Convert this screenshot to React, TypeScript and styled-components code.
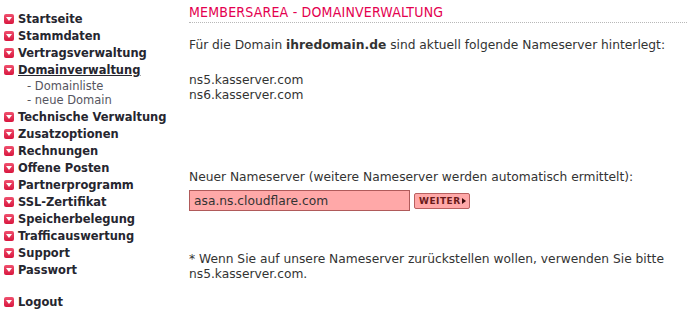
import React from "react"
import styled, { createGlobalStyle } from "styled-components"

const GlobalStyle = createGlobalStyle`
	html, body {
		margin: 0;
		padding: 0;
		background: #ffffff;
	}
	body {
		font-family: "DejaVu Sans", Verdana, sans-serif;
		color: #333333;
	}
`

const Page = styled.div`
	display: flex;
	width: 687px;
	height: 316px;
	overflow: hidden;
`

const Sidebar = styled.nav`
	width: 189px;
	flex-shrink: 0;
	padding: 10px 0 0 4px;
	box-sizing: border-box;
	display: flex;
	flex-direction: column;
`

const NavItem = styled.a<{ $active?: boolean; $gap?: number }>`
	display: flex;
	align-items: center;
	gap: 4px;
	height: 17px;
	margin-top: ${(p) => p.$gap ?? 0}px;
	font-family: "DejaVu Sans Condensed", "DejaVu Sans", sans-serif;
	font-size: 12.75px;
	font-weight: bold;
	color: #26262f;
	text-decoration: ${(p) => (p.$active ? "underline" : "none")};
	white-space: nowrap;
`

const SubItem = styled.a`
	display: block;
	height: 14px;
	line-height: 14px;
	padding-left: 23px;
	font-size: 11.5px;
	color: #555560;
	text-decoration: none;
`

const SubList = styled.div`
	display: flex;
	flex-direction: column;
	padding: 1px 0 1px;
`

const Bullet = styled.span`
	position: relative;
	width: 10px;
	height: 10px;
	border-radius: 2px;
	background: linear-gradient(#f0506e, #d8163e);
	flex-shrink: 0;
	&::after {
		content: "";
		position: absolute;
		left: 2px;
		top: 3px;
		border-left: 3px solid transparent;
		border-right: 3px solid transparent;
		border-top: 4.5px solid #ffffff;
	}
`

const Main = styled.main`
	flex: 1;
	display: flex;
	flex-direction: column;
`

const Title = styled.h1`
	margin: 0;
	padding: 5px 0 2px;
	font-family: "DejaVu Sans Condensed", "DejaVu Sans", sans-serif;
	font-size: 14px;
	font-weight: normal;
	line-height: 15px;
	color: #e4004f;
	letter-spacing: 0.2px;
	border-bottom: 1px dotted #b8b8b8;
`

const Text = styled.p<{ $top: number }>`
	margin: ${(p) => p.$top}px 0 0;
	font-size: 12.25px;
	line-height: 15px;
`

const FormRow = styled.div`
	display: flex;
	align-items: center;
	gap: 4px;
	margin-top: 5px;
`

const Input = styled.input`
	width: 221px;
	height: 21px;
	box-sizing: border-box;
	border: 1px solid #b05a5a;
	background: #ffa8a8;
	padding: 0 4px;
	font-family: "DejaVu Sans", Verdana, sans-serif;
	font-size: 12.25px;
	color: #333333;
	outline: none;
`

const Button = styled.button`
	height: 16px;
	padding: 0 3px 0 4px;
	display: flex;
	align-items: center;
	gap: 1px;
	border: 1px solid #b96060;
	border-radius: 2px;
	background: #ffa8a8;
	font-family: "DejaVu Sans", Verdana, sans-serif;
	font-size: 9px;
	font-weight: bold;
	letter-spacing: 0.5px;
	color: #6a1a1a;
	cursor: pointer;
`

const Arrow = styled.span`
	width: 0;
	height: 0;
	border-top: 3.5px solid transparent;
	border-bottom: 3.5px solid transparent;
	border-left: 4px solid #3a0a0a;
`

const items = [
	"Startseite",
	"Stammdaten",
	"Vertragsverwaltung",
	"Domainverwaltung",
	"Technische Verwaltung",
	"Zusatzoptionen",
	"Rechnungen",
	"Offene Posten",
	"Partnerprogramm",
	"SSL-Zertifikat",
	"Speicherbelegung",
	"Trafficauswertung",
	"Support",
	"Passwort",
]

export default function App() {
	return (
		<>
			<GlobalStyle />
			<Page>
				<Sidebar>
					{items.map((label) => (
						<React.Fragment key={label}>
							<NavItem href="#" $active={label === "Domainverwaltung"}>
								<Bullet />
								{label}
							</NavItem>
							{label === "Domainverwaltung" && (
								<SubList>
									<SubItem href="#">- Domainliste</SubItem>
									<SubItem href="#">- neue Domain</SubItem>
								</SubList>
							)}
						</React.Fragment>
					))}
					<NavItem href="#" $gap={15}>
						<Bullet />
						Logout
					</NavItem>
				</Sidebar>
				<Main>
					<Title>MEMBERSAREA - DOMAINVERWALTUNG</Title>
					<Text $top={15}>
						Für die Domain <b>ihredomain.de</b> sind aktuell folgende Nameserver hinterlegt:
					</Text>
					<Text $top={20}>
						ns5.kasserver.com
						<br />
						ns6.kasserver.com
					</Text>
					<Text $top={67}>Neuer Nameserver (weitere Nameserver werden automatisch ermittelt):</Text>
					<FormRow>
						<Input defaultValue="asa.ns.cloudflare.com" />
						<Button>
							WEITER
							<Arrow />
						</Button>
					</FormRow>
					<Text $top={41}>
						* Wenn Sie auf unsere Nameserver zurückstellen wollen, verwenden Sie bitte
						<br />
						ns5.kasserver.com.
					</Text>
				</Main>
			</Page>
		</>
	)
}
